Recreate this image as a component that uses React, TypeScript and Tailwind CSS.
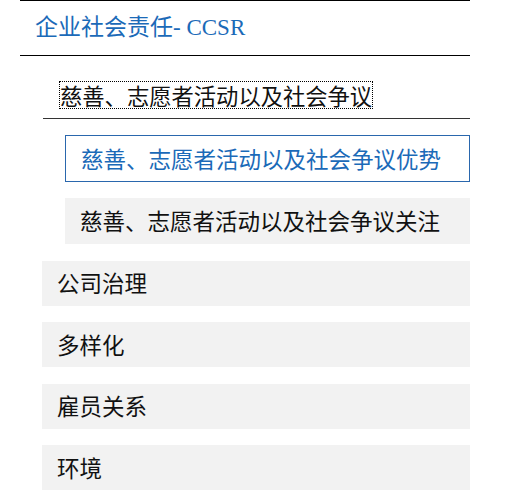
const items = ['公司治理', '多样化', '雇员关系', '环境'];

export default function App() {
  return (
    <div className="min-h-screen bg-white" style={{ fontFamily: '"Noto Sans CJK SC", sans-serif' }}>
      <div className="ml-[20px] w-[450px]">
        <div className="h-[56px] border-y border-black pl-[15px] flex items-center">
          <h1
            className="text-[23px] leading-none text-[#1b6ab8] pb-[2px]"
            style={{ fontFamily: '"Liberation Serif", "Noto Sans CJK SC", serif' }}
          >
            企业社会责任- CCSR
          </h1>
        </div>

        <div className="ml-[23px] border-b border-[#333] pt-[26px] pb-[10px] pl-[17px] flex">
          <span className="block h-[26px] leading-[26px] text-[22.3px] text-[#111] outline-1 outline-dotted outline-black">
            慈善、志愿者活动以及社会争议
          </span>
        </div>

        <div className="ml-[45px] mt-[16px] h-[47px] border border-[#2a67ad] pl-[15px] flex items-center text-[22.5px] text-[#1b6ab8]">
          慈善、志愿者活动以及社会争议优势
        </div>
        <div className="ml-[45px] mt-[16px] h-[46px] bg-[#f2f2f2] pl-[15px] flex items-center text-[22.5px] text-[#111]">
          慈善、志愿者活动以及社会争议关注
        </div>

        {items.map((item) => (
          <div
            key={item}
            className="ml-[22px] mt-[16.5px] h-[45px] bg-[#f2f2f2] pl-[15px] flex items-center text-[22.5px] text-[#111]"
          >
            {item}
          </div>
        ))}
      </div>
    </div>
  );
}
